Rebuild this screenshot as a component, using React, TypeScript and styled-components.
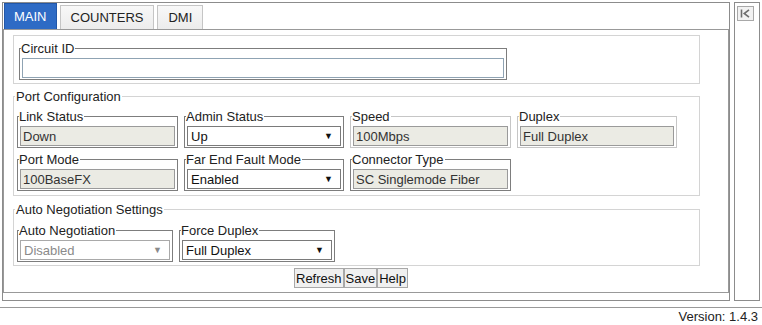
import styled, { createGlobalStyle } from "styled-components";

const GlobalStyle = createGlobalStyle`
    body {
        margin: 0;
        background: #ffffff;
        font-family: "Liberation Sans", Arial, sans-serif;
        font-size: 13px;
        color: #222;
    }
    input, button {
        font-family: "Liberation Sans", Arial, sans-serif;
        font-size: 13px;
    }
`

const Page = styled.div`
    width: 762px;
    padding-top: 2px;
`

const TopRow = styled.div`
    display: flex;
    gap: 4px;
    padding-left: 2px;
`

const TabsPanel = styled.div`
    width: 728px;
    height: 299px;
    box-sizing: border-box;
    border: 1px solid #8c8c8c;
    display: flex;
    flex-direction: column;
`

const TabBar = styled.div`
    display: flex;
    align-items: flex-end;
    gap: 3px;
    height: 26px;
    padding-left: 1px;
`

const Tab = styled.div<{ $active?: boolean }>`
    height: ${p => (p.$active ? "26px" : "24px")};
    box-sizing: border-box;
    padding: 0 ${p => (p.$active ? "9px" : "10px")};
    display: flex;
    align-items: center;
    font-size: 13px;
    border: 1px solid ${p => (p.$active ? "#2257a8" : "#c5c5c5")};
    border-bottom: none;
    background: ${p => (p.$active ? "#2e6bc5" : "linear-gradient(#f8f8f8, #ececec)")};
    color: ${p => (p.$active ? "#ffffff" : "#222")};
`

const Content = styled.div`
    height: 264px;
    box-sizing: border-box;
    border: 1px solid #999;
    padding: 5px 0 0 9px;
    display: flex;
    flex-direction: column;
`

const Section = styled.fieldset<{ $top?: number }>`
    width: 687px;
    box-sizing: border-box;
    margin: ${p => p.$top ?? 0}px 0 0 0;
    padding: 5px 5px 3px;
    border: 1px solid #d4d4d4;
    min-width: 0;
`

const LegendSection = styled.fieldset<{ $top?: number; $bottom?: number }>`
    width: 687px;
    box-sizing: border-box;
    margin: ${p => p.$top ?? 0}px 0 0 0;
    padding: 0 3px ${p => p.$bottom ?? 4}px;
    border: 1px solid #d4d4d4;
    min-width: 0;
`

const SectionLegend = styled.legend`
    padding: 0 1px;
    margin-left: -2px;
    line-height: 15px;
    color: #222;
`

const FieldRow = styled.div<{ $top?: number }>`
    display: flex;
    gap: 6px;
    margin-top: ${p => p.$top ?? 0}px;
`

const FieldBox = styled.fieldset<{ $w: number; $light?: boolean }>`
    width: ${p => p.$w}px;
    box-sizing: border-box;
    margin: 0;
    padding: 0 2px 1px;
    border: 1px solid ${p => (p.$light ? "#c6c6c6" : "#7d7d7d")};
    min-width: 0;
`

const FieldLegend = styled.legend`
    padding: 0 1px 0 0;
    margin-left: -1px;
    line-height: 15px;
    color: #222;
`

const TextInput = styled.input<{ $blue?: boolean }>`
    display: block;
    width: 100%;
    height: 20px;
    box-sizing: border-box;
    margin-top: 2px;
    padding: 0 2px;
    border: 1px solid ${p => (p.$blue ? "#8fa3b3" : "#9a9a9a")};
    background: #ffffff;
    outline: none;
`

const ReadValue = styled.input`
    display: block;
    width: 100%;
    height: 20px;
    box-sizing: border-box;
    margin-top: 2px;
    padding: 0 2px;
    border: 1px solid #9a9a9a;
    background: #ebebe4;
    color: #333;
    outline: none;
`

const SelectBox = styled.div<{ $disabled?: boolean }>`
    display: flex;
    align-items: center;
    justify-content: space-between;
    height: 20px;
    box-sizing: border-box;
    margin-top: 2px;
    padding: 0 7px 0 3px;
    border: 1px solid ${p => (p.$disabled ? "#a9a9a9" : "#7a7a7a")};
    background: #ffffff;
    color: ${p => (p.$disabled ? "#8a8a8a" : "#111")};
`

const Arrow = styled.span<{ $disabled?: boolean }>`
    font-size: 9px;
    color: ${p => (p.$disabled ? "#8a8a8a" : "#111")};
`

const ButtonRow = styled.div`
    display: flex;
    margin-top: 2px;
    padding-left: 281px;
`

const Button = styled.button`
    height: 20px;
    padding: 0 1px;
    margin: 0;
    border: 1px solid #a8a8a8;
    background: #f0f0f0;
    color: #111;
`

const Sidebar = styled.div`
    width: 26px;
    height: 299px;
    box-sizing: border-box;
    border: 1px solid #8c8c8c;
    padding: 3px 0 0 2px;
`

const CollapseButton = styled.div`
    width: 17px;
    height: 15px;
    box-sizing: border-box;
    border: 1px solid #a8a8a8;
    background: #f2f2f2;
    display: flex;
    align-items: center;
    justify-content: center;
`

const Footer = styled.div`
    margin-top: 6px;
    border-top: 1px solid #999;
    text-align: right;
    padding: 1px 4px 0 0;
    line-height: 15px;
    color: #222;
`

function Field({ label, w, light, children }: { label: string; w: number; light?: boolean; children: React.ReactNode }) {
    return (
        <FieldBox $w={w} $light={light}>
            <FieldLegend>{label}</FieldLegend>
            {children}
        </FieldBox>
    );
}

function Select({ value, disabled }: { value: string; disabled?: boolean }) {
    return (
        <SelectBox $disabled={disabled}>
            <span>{value}</span>
            <Arrow $disabled={disabled}>▼</Arrow>
        </SelectBox>
    );
}

function App() {
    return (
        <Page>
            <GlobalStyle />
            <TopRow>
                <TabsPanel>
                    <TabBar>
                        <Tab $active>MAIN</Tab>
                        <Tab>COUNTERS</Tab>
                        <Tab>DMI</Tab>
                    </TabBar>
                    <Content>
                        <Section>
                            <Field label="Circuit ID" w={488}>
                                <TextInput $blue defaultValue="" />
                            </Field>
                        </Section>
                        <LegendSection $top={5}>
                            <SectionLegend>Port Configuration</SectionLegend>
                            <FieldRow $top={5}>
                                <Field label="Link Status" w={161}>
                                    <ReadValue readOnly value="Down" />
                                </Field>
                                <Field label="Admin Status" w={160}>
                                    <Select value="Up" />
                                </Field>
                                <Field label="Speed" w={161} light>
                                    <ReadValue readOnly value="100Mbps" />
                                </Field>
                                <Field label="Duplex" w={160} light>
                                    <ReadValue readOnly value="Full Duplex" />
                                </Field>
                            </FieldRow>
                            <FieldRow $top={4}>
                                <Field label="Port Mode" w={161}>
                                    <ReadValue readOnly value="100BaseFX" />
                                </Field>
                                <Field label="Far End Fault Mode" w={160}>
                                    <Select value="Enabled" />
                                </Field>
                                <Field label="Connector Type" w={161}>
                                    <ReadValue readOnly value="SC Singlemode Fiber" />
                                </Field>
                            </FieldRow>
                        </LegendSection>
                        <LegendSection $top={6} $bottom={3}>
                            <SectionLegend>Auto Negotiation Settings</SectionLegend>
                            <FieldRow $top={6}>
                                <Field label="Auto Negotiation" w={156}>
                                    <Select value="Disabled" disabled />
                                </Field>
                                <Field label="Force Duplex" w={156}>
                                    <Select value="Full Duplex" />
                                </Field>
                            </FieldRow>
                        </LegendSection>
                        <ButtonRow>
                            <Button>Refresh</Button>
                            <Button>Save</Button>
                            <Button>Help</Button>
                        </ButtonRow>
                    </Content>
                </TabsPanel>
                <Sidebar>
                    <CollapseButton>
                        <svg width="11" height="9" viewBox="0 0 11 9">
                            <path d="M1.5 0.5 V8.5" stroke="#6e6e6e" strokeWidth="1.6" fill="none" />
                            <path d="M9 0.8 L4.2 4.5 L9 8.2" stroke="#6e6e6e" strokeWidth="1.6" fill="none" />
                        </svg>
                    </CollapseButton>
                </Sidebar>
            </TopRow>
            <Footer>Version: 1.4.3</Footer>
        </Page>
    );
}

export default App;
